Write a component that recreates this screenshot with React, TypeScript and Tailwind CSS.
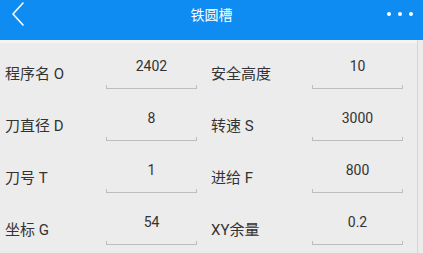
const rows: [string, string, string, string][] = [
  ["程序名 O", "2402", "安全高度", "10"],
  ["刀直径 D", "8", "转速 S", "3000"],
  ["刀号 T", "1", "进给 F", "800"],
  ["坐标 G", "54", "XY余量", "0.2"],
];

function Field({ label, value }: { label: string; value: string }) {
  return (
    <div className="flex w-[206px] items-start">
      <div className="mt-[26px] w-[106px] pl-[5px] text-[15px] leading-[17px] text-[#333333]">{label}</div>
      <div className="flex w-[91px] flex-col">
        <div className="pt-[18px] text-center text-[14px] leading-[17px] text-[#333333]">{value}</div>
        <div className="mt-[10px] h-[4px] border-x border-b border-[#bdbdbd]" />
      </div>
    </div>
  );
}

export default function App() {
  return (
    <div
      className="h-[253px] w-[423px] overflow-hidden bg-[#ececec]"
      style={{ fontFamily: 'Roboto, "Noto Sans CJK SC", sans-serif' }}
    >
      <div className="relative flex h-[40px] items-center justify-center bg-[#0f8cf2]">
        <svg className="absolute left-0 top-0" width="40" height="40" viewBox="0 0 40 40" fill="none">
          <path d="M23 3 L13 14 L23 25" stroke="white" strokeWidth="1.6" strokeLinecap="round" strokeLinejoin="round" />
        </svg>
        <span className="-mt-[10px] text-[14px] text-white">铁圆槽</span>
        <div className="absolute right-[10px] top-[12px] flex gap-[7px]">
          <span className="h-[4px] w-[4px] rounded-full bg-white" />
          <span className="h-[4px] w-[4px] rounded-full bg-white" />
          <span className="h-[4px] w-[4px] rounded-full bg-white" />
        </div>
      </div>
      <div className="flex">
        <div className="w-[417px]">
          <div className="h-[3px] bg-[#f4f4f4]" />
          <div className="-mt-[3px]">
            {rows.map((r) => (
              <div key={r[0]} className="flex h-[52px]">
                <Field label={r[0]} value={r[1]} />
                <Field label={r[2]} value={r[3]} />
              </div>
            ))}
          </div>
        </div>
        <div className="h-[213px] w-px bg-[#d6d6d6]" />
      </div>
    </div>
  );
}
